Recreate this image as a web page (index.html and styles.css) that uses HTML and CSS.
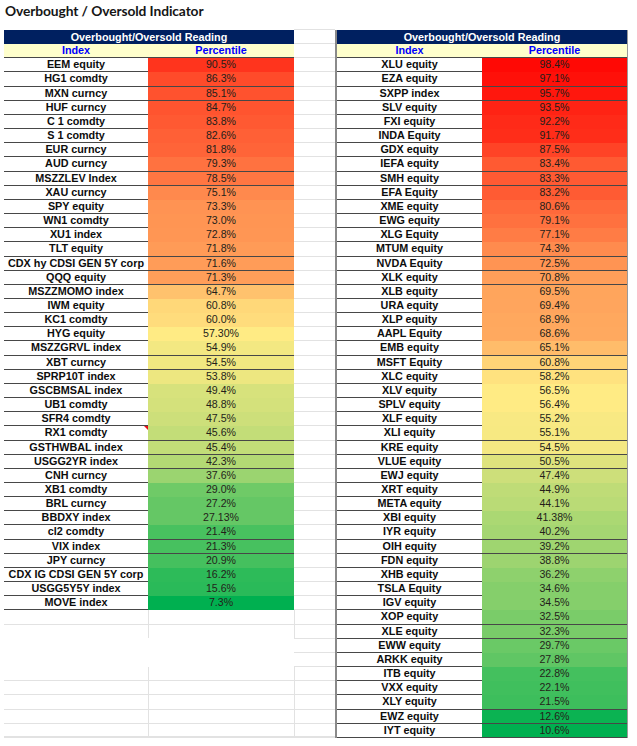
FILE: index.html
```html
<!DOCTYPE html>
<html lang="en">
<head>
<meta charset="utf-8">
<title>Overbought / Oversold Indicator</title>
<link rel="stylesheet" href="styles.css">
</head>
<body>
<h1 class="title">Overbought / Oversold Indicator</h1>
<div class="sheet">
  <div class="block block-left">
    <div class="tbl tbl-left" data-min="7.3" data-mid="57.3" data-max="100">
      <div class="hrow">Overbought/Oversold Reading</div>
      <div class="row sub"><span>Index</span><span>Percentile</span></div>
      <div class="row"><span class="nm">EEM equity</span><span class="pct">90.5%</span></div>
      <div class="row"><span class="nm">HG1 comdty</span><span class="pct">86.3%</span></div>
      <div class="row"><span class="nm">MXN curncy</span><span class="pct">85.1%</span></div>
      <div class="row"><span class="nm">HUF curncy</span><span class="pct">84.7%</span></div>
      <div class="row"><span class="nm">C 1 comdty</span><span class="pct">83.8%</span></div>
      <div class="row"><span class="nm">S 1 comdty</span><span class="pct">82.6%</span></div>
      <div class="row"><span class="nm">EUR curncy</span><span class="pct">81.8%</span></div>
      <div class="row"><span class="nm">AUD curncy</span><span class="pct">79.3%</span></div>
      <div class="row"><span class="nm">MSZZLEV Index</span><span class="pct">78.5%</span></div>
      <div class="row"><span class="nm">XAU curncy</span><span class="pct">75.1%</span></div>
      <div class="row"><span class="nm">SPY equity</span><span class="pct">73.3%</span></div>
      <div class="row"><span class="nm">WN1 comdty</span><span class="pct">73.0%</span></div>
      <div class="row"><span class="nm">XU1 index</span><span class="pct">72.8%</span></div>
      <div class="row"><span class="nm">TLT equity</span><span class="pct">71.8%</span></div>
      <div class="row"><span class="nm">CDX hy CDSI GEN 5Y corp</span><span class="pct">71.6%</span></div>
      <div class="row"><span class="nm">QQQ equity</span><span class="pct">71.3%</span></div>
      <div class="row"><span class="nm">MSZZMOMO index</span><span class="pct">64.7%</span></div>
      <div class="row"><span class="nm">IWM equity</span><span class="pct">60.8%</span></div>
      <div class="row"><span class="nm">KC1 comdty</span><span class="pct">60.0%</span></div>
      <div class="row"><span class="nm">HYG equity</span><span class="pct">57.30%</span></div>
      <div class="row"><span class="nm">MSZZGRVL index</span><span class="pct">54.9%</span></div>
      <div class="row"><span class="nm">XBT curncy</span><span class="pct">54.5%</span></div>
      <div class="row"><span class="nm">SPRP10T index</span><span class="pct">53.8%</span></div>
      <div class="row"><span class="nm">GSCBMSAL index</span><span class="pct">49.4%</span></div>
      <div class="row"><span class="nm">UB1 comdty</span><span class="pct">48.8%</span></div>
      <div class="row"><span class="nm">SFR4 comdty</span><span class="pct">47.5%</span></div>
      <div class="row"><span class="nm has-note">RX1 comdty</span><span class="pct">45.6%</span></div>
      <div class="row"><span class="nm">GSTHWBAL index</span><span class="pct">45.4%</span></div>
      <div class="row"><span class="nm">USGG2YR index</span><span class="pct">42.3%</span></div>
      <div class="row"><span class="nm">CNH curncy</span><span class="pct">37.6%</span></div>
      <div class="row"><span class="nm">XB1 comdty</span><span class="pct">29.0%</span></div>
      <div class="row"><span class="nm">BRL curncy</span><span class="pct">27.2%</span></div>
      <div class="row"><span class="nm">BBDXY index</span><span class="pct">27.13%</span></div>
      <div class="row"><span class="nm">cl2 comdty</span><span class="pct">21.4%</span></div>
      <div class="row"><span class="nm">VIX index</span><span class="pct">21.3%</span></div>
      <div class="row"><span class="nm">JPY curncy</span><span class="pct">20.9%</span></div>
      <div class="row"><span class="nm">CDX IG CDSI GEN 5Y corp</span><span class="pct">16.2%</span></div>
      <div class="row"><span class="nm">USGG5Y5Y index</span><span class="pct">15.6%</span></div>
      <div class="row"><span class="nm">MOVE index</span><span class="pct">7.3%</span></div>
    </div>
    <div class="erow"><span></span><span class="sep"></span></div>
    <div class="erow open"><span></span><span class="sep"></span></div>
    <div class="eblank"></div>
    <div class="erow"><span></span><span class="sep"></span></div>
    <div class="erow"><span></span><span class="sep"></span></div>
    <div class="erow"><span></span><span class="sep"></span></div>
    <div class="erow"><span></span><span class="sep"></span></div>
    <div class="erow last"><span></span><span class="sep"></span></div>
  </div>

  <div class="gap">
    <div class="gcell"></div><div class="gcell"></div><div class="gcell"></div><div class="gcell"></div><div class="gcell"></div>
    <div class="gcell"></div><div class="gcell"></div><div class="gcell"></div><div class="gcell"></div><div class="gcell"></div>
    <div class="gcell"></div><div class="gcell"></div><div class="gcell"></div><div class="gcell"></div><div class="gcell"></div>
    <div class="gcell"></div><div class="gcell"></div><div class="gcell"></div><div class="gcell"></div><div class="gcell"></div>
    <div class="gcell"></div><div class="gcell"></div><div class="gcell"></div><div class="gcell"></div><div class="gcell"></div>
    <div class="gcell"></div><div class="gcell"></div><div class="gcell"></div><div class="gcell"></div><div class="gcell"></div>
    <div class="gcell"></div><div class="gcell"></div><div class="gcell"></div><div class="gcell"></div><div class="gcell"></div>
    <div class="gcell"></div><div class="gcell"></div><div class="gcell"></div><div class="gcell"></div><div class="gcell"></div>
    <div class="gcell"></div>
    <div class="gcell edge"></div><div class="gcell edge"></div>
    <div class="gcell"></div><div class="gcell"></div>
    <div class="gcell edge"></div><div class="gcell edge"></div><div class="gcell edge"></div><div class="gcell edge"></div><div class="gcell edge last"></div>
  </div>

  <div class="block block-right">
    <div class="tbl tbl-right" data-min="10.6" data-mid="56.45" data-max="100">
      <div class="hrow">Overbought/Oversold Reading</div>
      <div class="row sub"><span>Index</span><span>Percentile</span></div>
      <div class="row"><span class="nm">XLU equity</span><span class="pct">98.4%</span></div>
      <div class="row"><span class="nm">EZA equity</span><span class="pct">97.1%</span></div>
      <div class="row"><span class="nm">SXPP index</span><span class="pct">95.7%</span></div>
      <div class="row"><span class="nm">SLV equity</span><span class="pct">93.5%</span></div>
      <div class="row"><span class="nm">FXI equity</span><span class="pct">92.2%</span></div>
      <div class="row"><span class="nm">INDA Equity</span><span class="pct">91.7%</span></div>
      <div class="row"><span class="nm">GDX equity</span><span class="pct">87.5%</span></div>
      <div class="row"><span class="nm">IEFA equity</span><span class="pct">83.4%</span></div>
      <div class="row"><span class="nm">SMH equity</span><span class="pct">83.3%</span></div>
      <div class="row"><span class="nm">EFA Equity</span><span class="pct">83.2%</span></div>
      <div class="row"><span class="nm">XME equity</span><span class="pct">80.6%</span></div>
      <div class="row"><span class="nm">EWG equity</span><span class="pct">79.1%</span></div>
      <div class="row"><span class="nm">XLG Equity</span><span class="pct">77.1%</span></div>
      <div class="row"><span class="nm">MTUM equity</span><span class="pct">74.3%</span></div>
      <div class="row"><span class="nm">NVDA Equity</span><span class="pct">72.5%</span></div>
      <div class="row"><span class="nm">XLK equity</span><span class="pct">70.8%</span></div>
      <div class="row"><span class="nm">XLB equity</span><span class="pct">69.5%</span></div>
      <div class="row"><span class="nm">URA equity</span><span class="pct">69.4%</span></div>
      <div class="row"><span class="nm">XLP equity</span><span class="pct">68.9%</span></div>
      <div class="row"><span class="nm">AAPL Equity</span><span class="pct">68.6%</span></div>
      <div class="row"><span class="nm">EMB equity</span><span class="pct">65.1%</span></div>
      <div class="row"><span class="nm">MSFT Equity</span><span class="pct">60.8%</span></div>
      <div class="row"><span class="nm">XLC equity</span><span class="pct">58.2%</span></div>
      <div class="row"><span class="nm">XLV equity</span><span class="pct">56.5%</span></div>
      <div class="row"><span class="nm">SPLV equity</span><span class="pct">56.4%</span></div>
      <div class="row"><span class="nm">XLF equity</span><span class="pct">55.2%</span></div>
      <div class="row"><span class="nm">XLI equity</span><span class="pct">55.1%</span></div>
      <div class="row"><span class="nm">KRE equity</span><span class="pct">54.5%</span></div>
      <div class="row"><span class="nm">VLUE equity</span><span class="pct">50.5%</span></div>
      <div class="row"><span class="nm">EWJ equity</span><span class="pct">47.4%</span></div>
      <div class="row"><span class="nm">XRT equity</span><span class="pct">44.9%</span></div>
      <div class="row"><span class="nm">META equity</span><span class="pct">44.1%</span></div>
      <div class="row"><span class="nm">XBI equity</span><span class="pct">41.38%</span></div>
      <div class="row"><span class="nm">IYR equity</span><span class="pct">40.2%</span></div>
      <div class="row"><span class="nm">OIH equity</span><span class="pct">39.2%</span></div>
      <div class="row"><span class="nm">FDN equity</span><span class="pct">38.8%</span></div>
      <div class="row"><span class="nm">XHB equity</span><span class="pct">36.2%</span></div>
      <div class="row"><span class="nm">TSLA Equity</span><span class="pct">34.6%</span></div>
      <div class="row"><span class="nm">IGV equity</span><span class="pct">34.5%</span></div>
      <div class="row"><span class="nm">XOP equity</span><span class="pct">32.5%</span></div>
      <div class="row"><span class="nm">XLE equity</span><span class="pct">32.3%</span></div>
      <div class="row"><span class="nm">EWW equity</span><span class="pct">29.7%</span></div>
      <div class="row"><span class="nm">ARKK equity</span><span class="pct">27.8%</span></div>
      <div class="row"><span class="nm">ITB equity</span><span class="pct">22.8%</span></div>
      <div class="row"><span class="nm">VXX equity</span><span class="pct">22.1%</span></div>
      <div class="row"><span class="nm">XLY equity</span><span class="pct">21.5%</span></div>
      <div class="row"><span class="nm">EWZ equity</span><span class="pct">12.6%</span></div>
      <div class="row"><span class="nm">IYT equity</span><span class="pct">10.6%</span></div>
    </div>
  </div>
</div>
<script src="script.js"></script>
</body>
</html>
```
FILE: styles.css
```css
html, body {
  margin: 0;
  padding: 0;
  background: #ffffff;
}

body {
  font-family: "Liberation Sans", Arial, sans-serif;
  color: #111;
}

.title {
  margin: 0;
  height: 30px;
  box-sizing: border-box;
  padding: 2px 0 0 5px;
  font-family: Lato, "Open Sans", sans-serif;
  font-weight: 700;
  font-size: 13.8px;
  line-height: 17px;
  color: #161616;
  letter-spacing: -0.1px;
}

.sheet {
  display: flex;
  align-items: flex-start;
}

.block-left {
  margin-left: 4px;
  width: 290px;
}

.gap {
  width: 41px;
  margin-top: -1px;
  border-top: 1px solid #e2e2e2;
}

.block-right {
  width: 290px;
  border-left: 2px solid #8a8a8a;
  border-right: 1px solid #9a9a9a;
}

.hrow {
  height: 14.17px;
  background: #002060;
  color: #ffffff;
  font-weight: 700;
  font-size: 10.8px;
  line-height: 14.6px;
  text-align: center;
}

.row {
  display: grid;
  grid-template-columns: 144px 146px;
  height: 14.17px;
  box-sizing: border-box;
  border-bottom: 1px solid #474747;
  line-height: 13.8px;
  text-align: center;
}

.tbl-right .row {
  grid-template-columns: 145px 145px;
}

.row.sub {
  background: #ffffcc;
  color: #0000ff;
  font-weight: 700;
  font-size: 10.8px;
}

.nm {
  position: relative;
  font-weight: 700;
  font-size: 10.8px;
  color: #0d0d0d;
  white-space: nowrap;
}

.pct {
  font-size: 10.6px;
  color: #241e1a;
}

.has-note::after {
  content: "";
  position: absolute;
  top: 0;
  right: 0;
  width: 0;
  height: 0;
  border-top: 4px solid #e8101a;
  border-left: 4px solid transparent;
}

.erow {
  display: grid;
  grid-template-columns: 144px 146px;
  height: 14.17px;
  box-sizing: border-box;
  border-bottom: 1px solid #e2e2e2;
}

.erow.open {
  border-bottom-color: transparent;
}

.erow.last {
  border-bottom: 2px solid #e2e2e2;
}

.erow .sep {
  border-left: 1px solid #e2e2e2;
}

.eblank {
  height: 28.34px;
}

.gcell {
  height: 14.17px;
  box-sizing: border-box;
  border-bottom: 1px solid #e2e2e2;
}

.gcell.edge {
  border-left: 1px solid #e2e2e2;
}

.gcell.last {
  border-bottom: 2px solid #e2e2e2;
}
```
FILE: script.js
```js
(function () {
  var GREEN = [0, 176, 80];
  var YELLOW = [255, 235, 132];
  var RED = [255, 0, 0];

  function mix(a, b, t) {
    t = Math.max(0, Math.min(1, t));
    return a.map(function (v, i) { return Math.round(v + (b[i] - v) * t); });
  }

  document.querySelectorAll('.tbl').forEach(function (tbl) {
    var min = parseFloat(tbl.dataset.min);
    var mid = parseFloat(tbl.dataset.mid);
    var max = parseFloat(tbl.dataset.max);
    tbl.querySelectorAll('.pct').forEach(function (cell) {
      var v = parseFloat(cell.textContent);
      var c = v >= mid
        ? mix(YELLOW, RED, (v - mid) / (max - mid))
        : mix(GREEN, YELLOW, (v - min) / (mid - min));
      cell.style.backgroundColor = 'rgb(' + c.join(',') + ')';
    });
  });
})();
```
